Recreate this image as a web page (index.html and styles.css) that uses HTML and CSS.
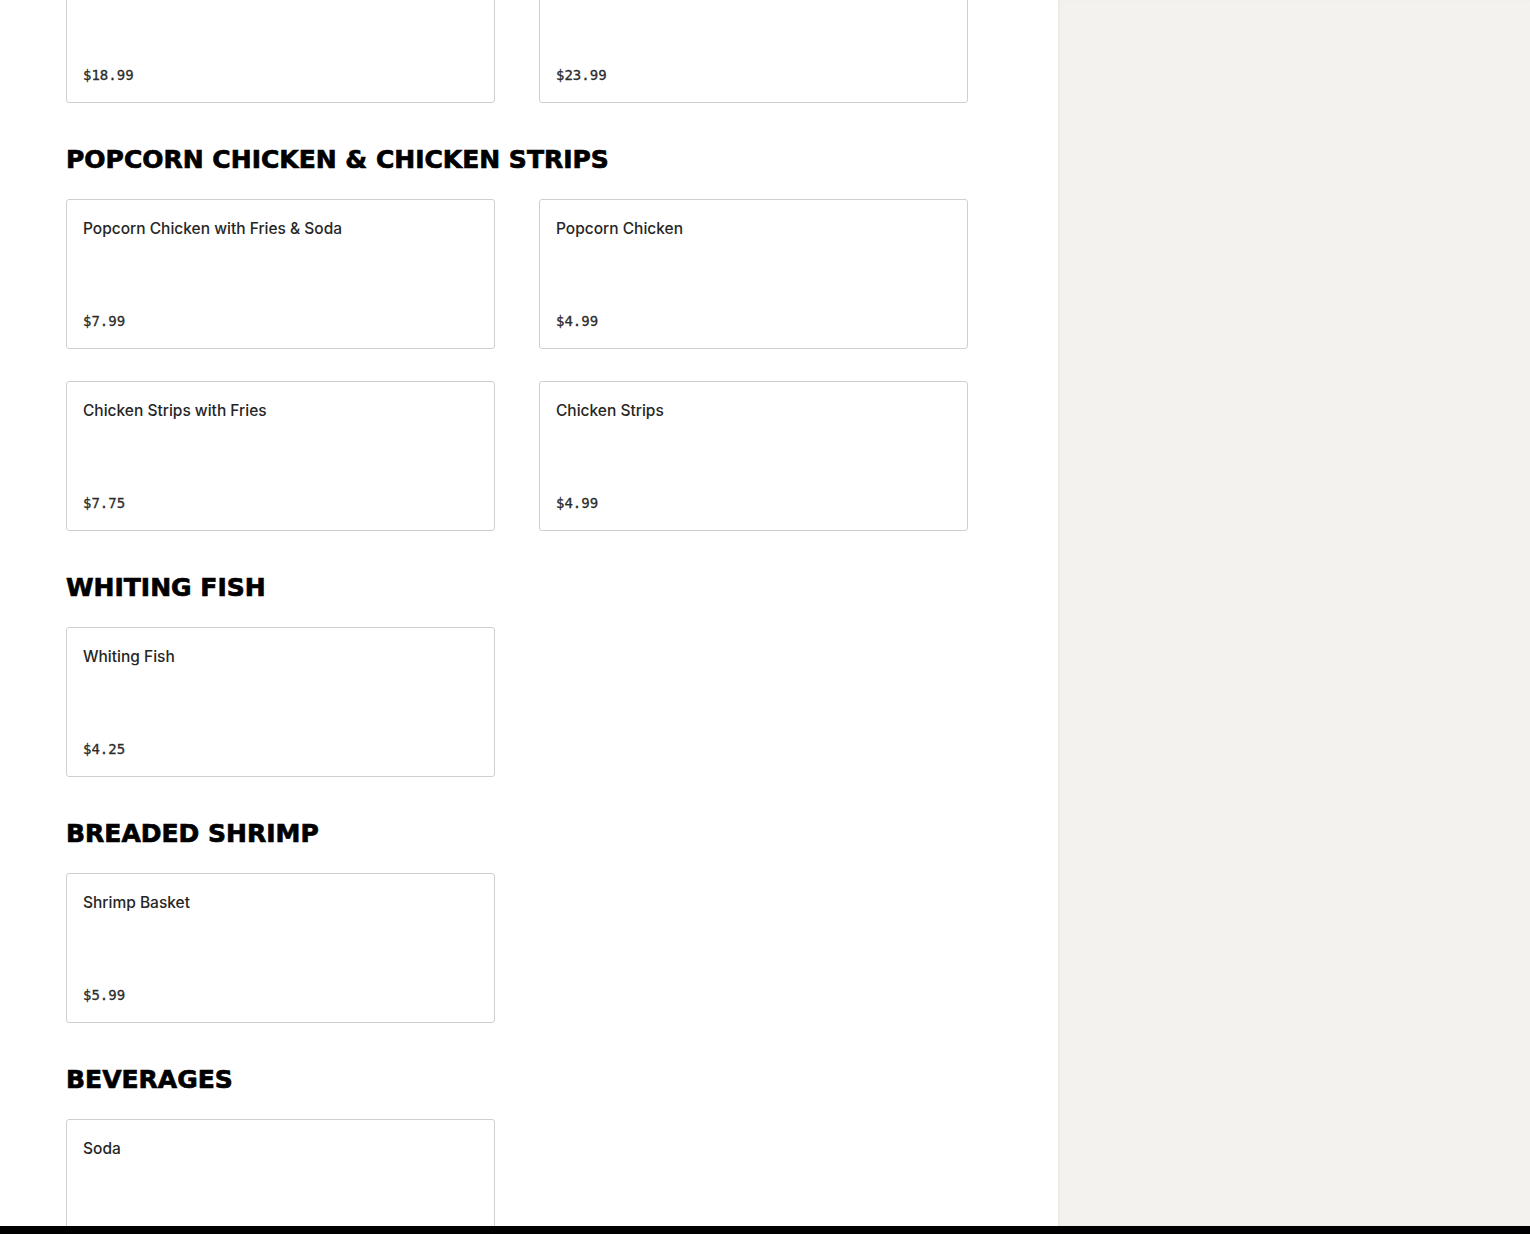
FILE: index.html
```html
<!DOCTYPE html>
<html lang="en">
<head>
    <meta charset="UTF-8">
    <meta name="viewport" content="width=device-width, initial-scale=1.0">
    <title>Menu</title>
    <link rel="stylesheet" href="styles.css">
</head>
<body>
    <div class="page">
        <!-- Menu column -->
        <main class="menu">
            <section class="menu-section first">
                <div class="items">
                    <div class="item">
                        <p class="item-name"></p>
                        <p class="item-price">$18.99</p>
                    </div>
                    <div class="item">
                        <p class="item-name"></p>
                        <p class="item-price">$23.99</p>
                    </div>
                </div>
            </section>

            <section class="menu-section">
                <h2>Popcorn Chicken &amp; Chicken Strips</h2>
                <div class="items">
                    <div class="item">
                        <p class="item-name">Popcorn Chicken with Fries &amp; Soda</p>
                        <p class="item-price">$7.99</p>
                    </div>
                    <div class="item">
                        <p class="item-name">Popcorn Chicken</p>
                        <p class="item-price">$4.99</p>
                    </div>
                    <div class="item">
                        <p class="item-name">Chicken Strips with Fries</p>
                        <p class="item-price">$7.75</p>
                    </div>
                    <div class="item">
                        <p class="item-name">Chicken Strips</p>
                        <p class="item-price">$4.99</p>
                    </div>
                </div>
            </section>

            <section class="menu-section">
                <h2>Whiting Fish</h2>
                <div class="items">
                    <div class="item">
                        <p class="item-name">Whiting Fish</p>
                        <p class="item-price">$4.25</p>
                    </div>
                </div>
            </section>

            <section class="menu-section">
                <h2>Breaded Shrimp</h2>
                <div class="items">
                    <div class="item">
                        <p class="item-name">Shrimp Basket</p>
                        <p class="item-price">$5.99</p>
                    </div>
                </div>
            </section>

            <section class="menu-section">
                <h2>Beverages</h2>
                <div class="items">
                    <div class="item">
                        <p class="item-name">Soda</p>
                        <p class="item-price"></p>
                    </div>
                </div>
            </section>
        </main>

        <!-- Order sidebar -->
        <aside class="sidebar"></aside>
    </div>

    <!-- Bottom bar -->
    <div class="bottom-bar"></div>
</body>
</html>
```

FILE: styles.css
```css
body {
    margin: 0;
    font-family: 'Inter', 'Liberation Sans', sans-serif;
    background-color: #fff;
    color: #2b2b2b;
    overflow: hidden;
    height: 1234px;
}

.page {
    display: grid;
    grid-template-columns: 1058px 1fr;
    min-height: 1234px;
}

/* Menu column */
.menu {
    padding: 0 90px 0 66px;
}

.menu-section.first {
    margin-top: -47px;
}

.menu-section h2 {
    margin: 44px 0 26px;
    font-family: 'DejaVu Sans', sans-serif;
    font-weight: bold;
    font-size: 25px;
    line-height: 26px;
    text-transform: uppercase;
    color: #000;
    -webkit-text-stroke: 0.7px #000;
}

.items {
    display: grid;
    grid-template-columns: 429px 429px;
    column-gap: 44px;
    row-gap: 32px;
}

.item {
    box-sizing: border-box;
    height: 150px;
    padding: 17px 16px 17px 16px;
    border: 1px solid #cfcfcf;
    border-radius: 3px;
    display: flex;
    flex-direction: column;
    justify-content: space-between;
}

.item-name {
    margin: 0;
    font-size: 15.5px;
    font-weight: 500;
    line-height: 24px;
    min-height: 24px;
    color: #262626;
}

.item-price {
    margin: 0;
    font-family: 'DejaVu Sans Mono', 'Liberation Mono', monospace;
    font-size: 14px;
    line-height: 20px;
    min-height: 20px;
    color: #2b2b2b;
    -webkit-text-stroke: 0.3px #2b2b2b;
}

/* Sidebar */
.sidebar {
    background-color: #f3f2ef;
    box-shadow: inset 2px 0 3px rgba(0, 0, 0, 0.03);
}

.bottom-bar {
    position: fixed;
    left: 0;
    right: 0;
    bottom: 0;
    height: 8px;
    background-color: #000;
}
```
